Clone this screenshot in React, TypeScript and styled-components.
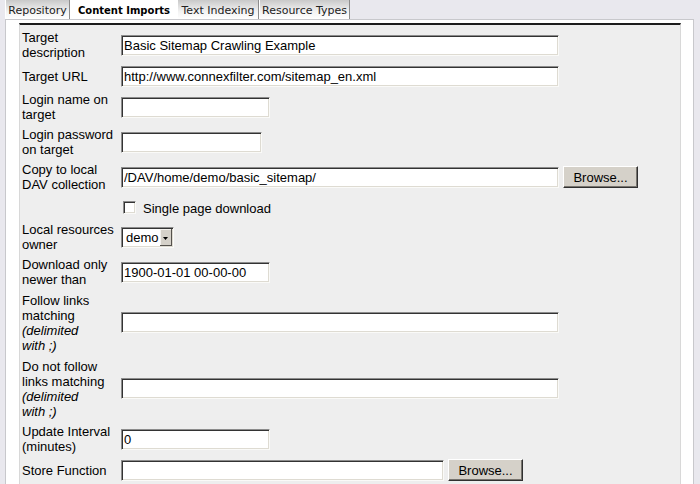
import React, { useId, useState } from "react";
import styled, { createGlobalStyle, css } from "styled-components";

const GlobalStyle = createGlobalStyle`
  *, *::before, *::after { box-sizing: border-box; }
  body {
    margin: 0;
    background: #e9e8ee;
    color: #000;
    font: 13px/15px "Liberation Sans", Arial, sans-serif;
  }
`;

const sunken = css`
  border: 1px solid;
  border-color: #8c8c8c #fafaf8 #fafaf8 #8c8c8c;
  box-shadow: inset 1px 1px 0 #333, inset -1px -1px 0 #dedbd2;
  background-color: #fff;
`;

const Page = styled.div`
  display: flex;
  flex-direction: column;
  min-height: 100vh;
  padding: 0 6px 0 5px;
`;

const TabBar = styled.nav`
  display: flex;
  height: 20px;
  margin-bottom: -1px;
`;

const Tab = styled.a<{ $active?: boolean; $width: number }>`
  flex: 0 0 ${(p) => p.$width}px;
  height: ${(p) => (p.$active ? 20 : 19)}px;
  border-left: 1px solid #fff;
  border-right: ${(p) => (p.$active ? "0" : "1px solid #8c8c8c")};
  background: ${(p) =>
    p.$active ? "#fff" : "linear-gradient(#c9c9c9, #f2f2f2 60%, #fff)"};
  color: ${(p) => (p.$active ? "#000" : "#222")};
  font-family: Verdana, "DejaVu Sans", sans-serif;
  font-size: ${(p) => (p.$active ? 10 : 11)}px;
  font-weight: ${(p) => (p.$active ? 700 : 400)};
  line-height: 21px;
  text-align: center;
  text-decoration: none;
  white-space: nowrap;
`;

const Panel = styled.main`
  flex: 1;
  display: flex;
  padding: 3px 12px 0 13px;
  border: 1px solid #c8c8cc;
  border-bottom: 0;
  background: #fff;
`;

const Form = styled.form`
  flex: 1;
  min-width: 0;
  display: flex;
  flex-direction: column;
  gap: 5px;
  padding: 5px 2px 3px;
  border: 1px solid #d8d8d8;
  border-top: 2px solid #1c1c1c;
  border-bottom: 0;
  background: #eee;
`;

const Row = styled.div<{ $height?: number }>`
  display: grid;
  grid-template-columns: 94px minmax(0, 1fr);
  column-gap: 5px;
  align-items: center;
  min-height: ${(p) => p.$height ?? 22}px;
`;

const Controls = styled.div`
  grid-column: 2;
  display: flex;
  align-items: center;
  gap: 4px;
`;

const Caption = styled.label`
  color: #000;
`;

const TextBox = styled.input<{ $width: number }>`
  ${sunken}
  flex: 0 1 ${(p) => p.$width}px;
  min-width: 0;
  height: 21px;
  padding: 1px 2px;
  border-radius: 0;
  color: #000;
  font: inherit;
  outline: 0;
`;

const Button = styled.button`
  width: 75px;
  height: 22px;
  padding: 0;
  border: 1px solid;
  border-color: #fff #303030 #303030 #fff;
  box-shadow: inset -1px -1px 0 #77746e;
  background: #d5d1c9;
  color: #000;
  font: inherit;
`;

const CheckLabel = styled.label`
  display: flex;
  align-items: center;
  gap: 7px;
  padding: 3px 0 0 2px;
`;

const CheckBox = styled.input`
  ${sunken}
  appearance: none;
  width: 13px;
  height: 13px;
  margin: 0 0 3px;
  &:checked { background-image: linear-gradient(135deg, transparent 40%, #000 40% 60%, transparent 60%); }
`;

const SelectWrap = styled.span`
  position: relative;
  display: flex;
`;

const SelectBox = styled.select`
  ${sunken}
  appearance: none;
  width: 53px;
  height: 21px;
  padding: 0 0 0 4px;
  border-radius: 0;
  color: #000;
  font: inherit;
  outline: 0;
`;

const SelectArrow = styled.svg`
  position: absolute;
  top: 2px;
  right: 2px;
  width: 12px;
  height: 17px;
  pointer-events: none;
`;

type FieldProps = {
  label: string;
  hint?: string;
  value?: string;
  width: number;
  type?: string;
  browse?: boolean;
};

function Field({ label, hint, value = "", width, type = "text", browse }: FieldProps) {
  const id = useId();
  return (
    <Row $height={hint ? 61 : undefined}>
      <Caption htmlFor={id}>
        {label} {hint && <em>{hint}</em>}
      </Caption>
      <Controls>
        <TextBox id={id} type={type} defaultValue={value} $width={width} />
        {browse && <Button type="button">Browse...</Button>}
      </Controls>
    </Row>
  );
}

const delimiterHint = "(delimited with\u00a0;)";

const tabs = [
  { name: "Repository", width: 65 },
  { name: "Content Imports", width: 107 },
  { name: "Text Indexing", width: 82 },
  { name: "Resource Types", width: 91 },
];

export default function App() {
  const [active, setActive] = useState("Content Imports");
  return (
    <>
      <GlobalStyle />
      <Page>
        <TabBar>
          {tabs.map((t) => (
            <Tab
              key={t.name}
              href="#"
              $width={t.width}
              $active={t.name === active}
              onClick={() => setActive(t.name)}
            >
              {t.name}
            </Tab>
          ))}
        </TabBar>
        <Panel>
          <Form>
            <Field label="Target description" value="Basic Sitemap Crawling Example" width={438} />
            <Field label="Target URL" value="http://www.connexfilter.com/sitemap_en.xml" width={438} />
            <Field label="Login name on target" width={149} />
            <Field label="Login password on target" type="password" width={141} />
            <Field label="Copy to local DAV collection" value="/DAV/home/demo/basic_sitemap/" width={438} browse />
            <Row $height={20}>
              <Controls>
                <CheckLabel>
                  <CheckBox type="checkbox" />
                  Single page download
                </CheckLabel>
              </Controls>
            </Row>
            <Row>
              <Caption htmlFor="owner">Local resources owner</Caption>
              <Controls>
                <SelectWrap>
                  <SelectBox id="owner" defaultValue="demo">
                    <option>demo</option>
                  </SelectBox>
                  <SelectArrow viewBox="0 0 12 17" aria-hidden="true">
                    <path d="M0 0H12V17H0Z" fill="#55524d" />
                    <path d="M0 0H11V16H0Z" fill="#f4f2ee" />
                    <path d="M1 1H11V16H1Z" fill="#d5d1c9" />
                    <path d="M3 8H8L5.5 11Z" fill="#000" />
                  </SelectArrow>
                </SelectWrap>
              </Controls>
            </Row>
            <Field label="Download only newer than" value="1900-01-01 00-00-00" width={149} />
            <Field label="Follow links matching" hint={delimiterHint} width={438} />
            <Field label="Do not follow links matching" hint={delimiterHint} width={438} />
            <Field label="Update Interval (minutes)" value="0" width={149} />
            <Field label="Store Function" width={323} browse />
          </Form>
        </Panel>
      </Page>
    </>
  );
}
